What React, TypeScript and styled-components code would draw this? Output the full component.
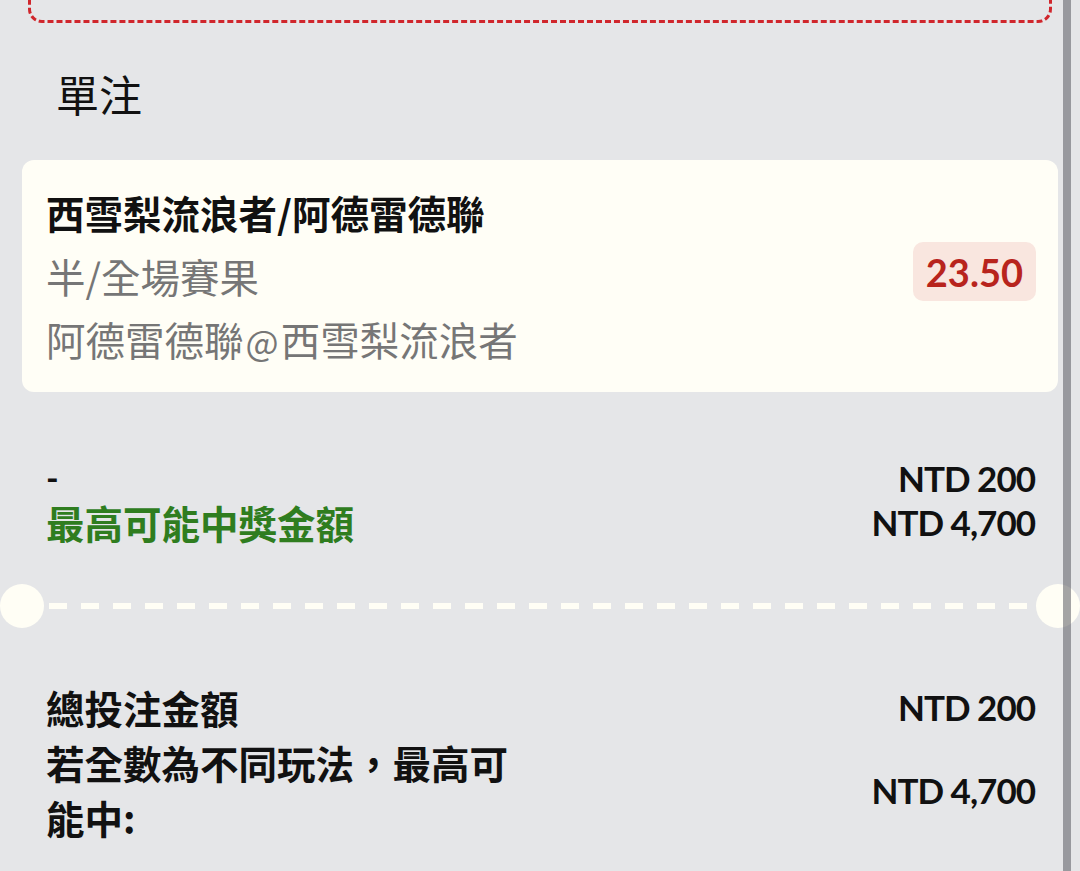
import styled, { createGlobalStyle } from "styled-components";

const GlobalStyle = createGlobalStyle`
  body {
    margin: 0;
    background: #e5e6e8;
    font-family: "Lato", "Noto Sans CJK TC", sans-serif;
    color: #111111;
  }
`;

const Page = styled.div`
  position: relative;
  width: 1080px;
  height: 871px;
  overflow: hidden;
  background: #e5e6e8;
`;

const ScrollBar = styled.div`
  position: absolute;
  top: 0;
  bottom: 0;
  left: 1063px;
  width: 8px;
  background: rgba(90, 90, 96, 0.55);
`;

const Content = styled.div`
  padding: 0 22px;
`;

const PrevBox = styled.div`
  height: 60px;
  margin: -43px 6px 0 6px;
  border: 3px dashed #d0262c;
  border-radius: 14px;
`;

const SectionTitle = styled.div`
  margin: 40px 0 0 34px;
  font-family: "Noto Sans CJK TC", sans-serif;
  font-size: 43px;
  line-height: 60px;
  font-weight: 400;
`;

const Card = styled.div`
  margin-top: 37px;
  display: flex;
  align-items: center;
  justify-content: space-between;
  padding: 21px 22px 20px 24px;
  background: #fffef6;
  border-radius: 12px;
`;

const CardText = styled.div`
  display: flex;
  flex-direction: column;
`;

const CardLine = styled.div<{ $strong?: boolean }>`
  font-family: "Noto Sans CJK TC", sans-serif;
  font-size: ${(p) => (p.$strong ? "38.5px" : "39.5px")};
  line-height: 63px;
  font-weight: ${(p) => (p.$strong ? 700 : 400)};
  color: ${(p) => (p.$strong ? "#111111" : "#767676")};
  white-space: nowrap;
`;

const At = styled.span`
  font-size: 35px;
  padding: 0 2px;
`;

const OddsBadge = styled.div`
  padding: 0 13px;
  height: 59px;
  display: flex;
  align-items: center;
  margin-bottom: 10px;
  background: #f9e6df;
  border-radius: 10px;
  color: #b8241d;
  font-family: "Lato", sans-serif;
  font-weight: 700;
  font-size: 38px;
`;

const Summary = styled.div<{ $top: number; $lh: number }>`
  margin-top: ${(p) => p.$top}px;
  padding: 0 23px 0 24px;
  display: flex;
  flex-direction: column;
  line-height: ${(p) => p.$lh}px;
`;

const Row = styled.div`
  display: flex;
  align-items: center;
  justify-content: space-between;
`;

const Label = styled.div<{ $green?: boolean }>`
  max-width: 478px;
  font-family: "Noto Sans CJK TC", sans-serif;
  font-size: 38.5px;
  font-weight: 700;
  color: ${(p) => (p.$green ? "#2f7d1f" : "#111111")};
`;

const Dash = styled.div`
  font-family: "Lato", sans-serif;
  font-size: 34px;
  font-weight: 700;
`;

const Value = styled.div`
  font-family: "Lato", sans-serif;
  font-size: 35px;
  letter-spacing: -1px;
  font-weight: 700;
  color: #111111;
  white-space: nowrap;
`;

const Divider = styled.div`
  margin-top: 40px;
  display: flex;
  align-items: center;
  height: 44px;
`;

const Notch = styled.div`
  width: 44px;
  height: 44px;
  flex: none;
  border-radius: 50%;
  background: #fffef5;
`;

const DashLine = styled.div`
  flex: 1;
  height: 6px;
  margin: 0 4px 0 5px;
  background: repeating-linear-gradient(
    to right,
    #fffef5 0 18px,
    transparent 18px 32px
  );
`;

export default function App() {
  return (
    <Page>
      <GlobalStyle />
      <Content>
        <PrevBox />
        <SectionTitle>單注</SectionTitle>
        <Card>
          <CardText>
            <CardLine $strong>西雪梨流浪者/阿德雷德聯</CardLine>
            <CardLine>半/全場賽果</CardLine>
            <CardLine>
              阿德雷德聯<At>@</At>西雪梨流浪者
            </CardLine>
          </CardText>
          <OddsBadge>23.50</OddsBadge>
        </Card>
        <Summary $top={64} $lh={44}>
          <Row>
            <Dash>-</Dash>
            <Value>NTD 200</Value>
          </Row>
          <Row>
            <Label $green>最高可能中獎金額</Label>
            <Value>NTD 4,700</Value>
          </Row>
        </Summary>
      </Content>
      <Divider>
        <Notch />
        <DashLine />
        <Notch />
      </Divider>
      <Content>
        <Summary $top={52} $lh={55}>
          <Row>
            <Label>總投注金額</Label>
            <Value>NTD 200</Value>
          </Row>
          <Row>
            <Label>若全數為不同玩法，最高可能中:</Label>
            <Value>NTD 4,700</Value>
          </Row>
        </Summary>
      </Content>
      <ScrollBar />
    </Page>
  );
}
